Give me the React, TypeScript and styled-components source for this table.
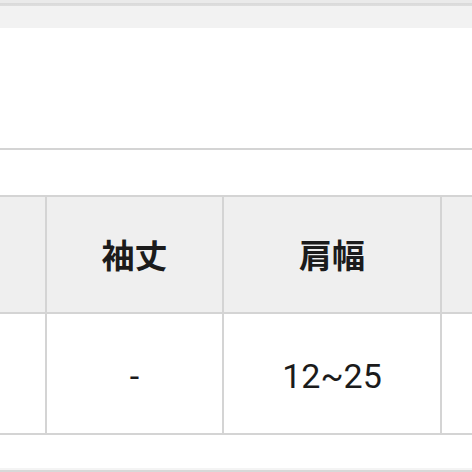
import React from "react";
import styled, { createGlobalStyle } from "styled-components";

const Global = createGlobalStyle`
  html, body { margin: 0; padding: 0; background: #ffffff; }
  body { width: 472px; height: 472px; overflow: hidden; font-family: "Noto Sans", "Noto Sans CJK JP", sans-serif; }
`;

const Page = styled.div`
  width: 472px;
  height: 472px;
  display: flex;
  flex-direction: column;
  overflow: hidden;
  background: #ffffff;
`;

const TopBar = styled.div`
  height: 28px;
  flex-shrink: 0;
  background: linear-gradient(to bottom, #eaeaea 0, #eaeaea 3px, #d9d9d9 3px, #dedede 6px, #f2f2f2 6px, #f2f2f2 100%);
`;

const Blank = styled.div<{ $h: number }>`
  height: ${(p) => p.$h}px;
  flex-shrink: 0;
`;

const Divider = styled.div`
  height: 2px;
  flex-shrink: 0;
  background: #d4d4d4;
`;

const TableWrap = styled.div`
  flex-shrink: 0;
  overflow: hidden;
  border-top: 2px solid #d4d4d4;
  border-bottom: 2px solid #d4d4d4;
  background: #d4d4d4;
`;

const Grid = styled.div`
  display: grid;
  grid-template-columns: 45px 175px 216px 200px;
  grid-template-rows: 115px 119px;
  gap: 2px;
  width: 642px;
`;

const Cell = styled.div<{ $head?: boolean }>`
  display: flex;
  align-items: center;
  justify-content: center;
  background: ${(p) => (p.$head ? "#efefef" : "#ffffff")};
  color: #1b1b1b;
  font-family: ${(p) =>
    p.$head ? '"Noto Sans CJK JP", "Noto Sans", sans-serif' : 'Roboto, "Noto Sans", sans-serif'};
  font-weight: ${(p) => (p.$head ? 700 : 400)};
  font-size: ${(p) => (p.$head ? "33px" : "34px")};
  line-height: 1;
  padding-top: ${(p) => (p.$head ? "0" : "4px")};
`;

const Footer = styled.div`
  flex: 1;
  border-bottom: 2px solid #d8d8d8;
  box-shadow: inset 0 -5px 0 -3px #f4f4f4;
`;

export default function App() {
  return (
    <>
      <Global />
      <Page>
        <TopBar />
        <Blank $h={120} />
        <Divider />
        <Blank $h={45} />
        <TableWrap>
          <Grid>
            <Cell $head />
            <Cell $head>袖丈</Cell>
            <Cell $head>肩幅</Cell>
            <Cell $head />
            <Cell />
            <Cell>-</Cell>
            <Cell>12~25</Cell>
            <Cell />
          </Grid>
        </TableWrap>
        <Footer />
      </Page>
    </>
  );
}
